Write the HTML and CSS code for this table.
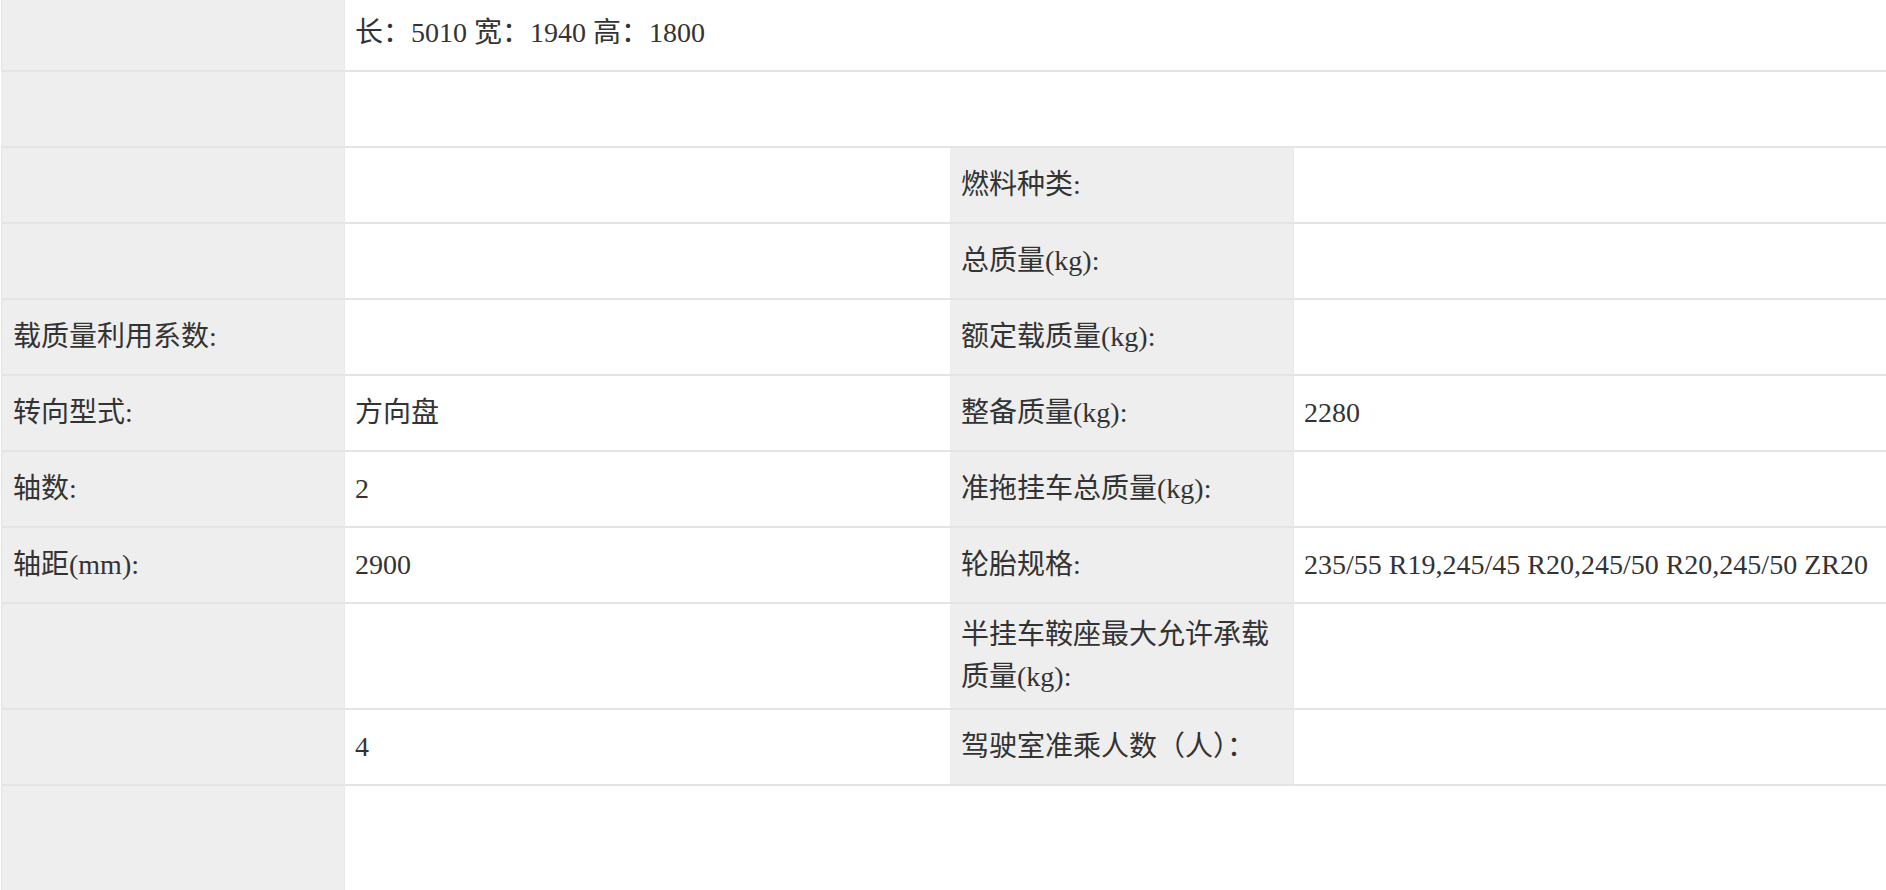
FILE: index.html
```html
<!DOCTYPE html>
<html lang="zh-CN">
<head>
<meta charset="utf-8">
<title>车辆参数</title>
<link rel="stylesheet" href="styles.css">
</head>
<body>
<div class="spec">
  <div class="cell label"></div>
  <div class="cell value wide">长：5010 宽：1940 高：1800</div>

  <div class="cell label"></div>
  <div class="cell value wide"></div>

  <div class="cell label"></div>
  <div class="cell value"></div>
  <div class="cell label">燃料种类:</div>
  <div class="cell value"></div>

  <div class="cell label"></div>
  <div class="cell value"></div>
  <div class="cell label">总质量(kg):</div>
  <div class="cell value"></div>

  <div class="cell label">载质量利用系数:</div>
  <div class="cell value"></div>
  <div class="cell label">额定载质量(kg):</div>
  <div class="cell value"></div>

  <div class="cell label">转向型式:</div>
  <div class="cell value">方向盘</div>
  <div class="cell label">整备质量(kg):</div>
  <div class="cell value">2280</div>

  <div class="cell label">轴数:</div>
  <div class="cell value">2</div>
  <div class="cell label">准拖挂车总质量(kg):</div>
  <div class="cell value"></div>

  <div class="cell label">轴距(mm):</div>
  <div class="cell value">2900</div>
  <div class="cell label">轮胎规格:</div>
  <div class="cell value nowrap">235/55 R19,245/45 R20,245/50 R20,245/50 ZR20</div>

  <div class="cell label"></div>
  <div class="cell value"></div>
  <div class="cell label">半挂车鞍座最大允许承载质量(kg):</div>
  <div class="cell value"></div>

  <div class="cell label"></div>
  <div class="cell value">4</div>
  <div class="cell label">驾驶室准乘人数（人）：</div>
  <div class="cell value"></div>

  <div class="cell label last"></div>
  <div class="cell value wide last"></div>
</div>
</body>
</html>
```

FILE: styles.css
```css
html, body {
  margin: 0;
  padding: 0;
  background: #ffffff;
}

body {
  font-family: "Liberation Serif", "Noto Sans CJK SC", serif;
  font-size: 28px;
  line-height: 42px;
  color: #333333;
  overflow: hidden;
}

.spec {
  display: grid;
  grid-template-columns: 344px 605px 344px 1fr;
  margin: -4px 0 0 1px;
}

.cell {
  box-sizing: border-box;
  min-height: 76px;
  padding: 10px 11px;
  border-bottom: 2px solid #e4e4e4;
  display: flex;
  align-items: center;
}

.label {
  background: #eeeeee;
  border-right: 1px solid #e9e9e9;
}

.spec > .label:first-child,
.spec > .label:nth-child(4n+1) {
  border-left: 1px solid #e2e2e2;
}

.value {
  background: #ffffff;
  padding-left: 10px;
}

.wide {
  grid-column: span 3;
}

.nowrap {
  white-space: nowrap;
}

.last {
  min-height: 130px;
  border-bottom: none;
}
```
